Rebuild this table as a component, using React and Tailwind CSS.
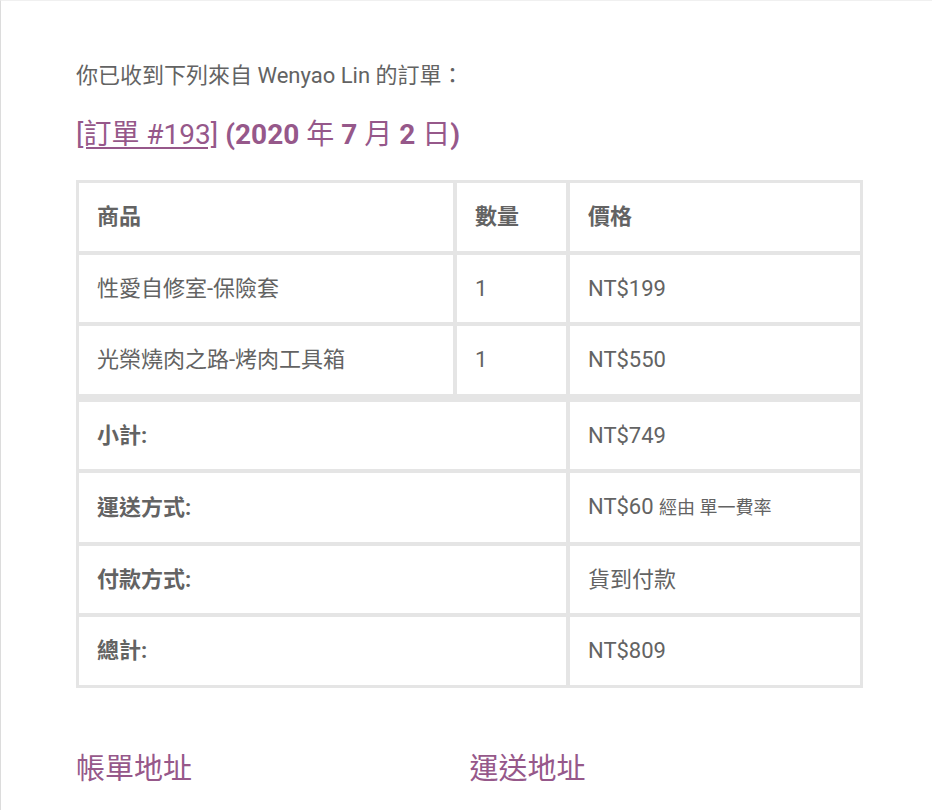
import React from "react";

const FONT = { fontFamily: 'Roboto, "Noto Sans CJK TC", "Liberation Sans", sans-serif' };

function Th({ children, className = "", ...rest }) {
  return (
    <th
      {...rest}
      className={
        "border-2 border-[#e5e5e5] px-[18px] py-[18px] text-left align-middle text-[22px] font-bold leading-[31.5px] text-[#636363] " +
        className
      }
    >
      {children}
    </th>
  );
}

function Td({ children, className = "", ...rest }) {
  return (
    <td
      {...rest}
      className={
        "border-2 border-[#e5e5e5] px-[18px] py-[18px] text-left align-middle text-[22px] font-normal leading-[31.5px] text-[#636363] " +
        className
      }
    >
      {children}
    </td>
  );
}

export default function App() {
  return (
    <div
      style={FONT}
      className="min-h-[810px] w-[932px] border-l border-t border-l-[#dcdcdc] border-t-[#f0f0f0] bg-white pl-[75px]"
    >
      <div className="w-[787px] pt-[59px]">
        <p className="mb-[26px] text-[22px] leading-[31px] text-[#636363]">
          你已收到下列來自 Wenyao Lin 的訂單：
        </p>
        <h2 className="mb-[28px] mt-[3px] text-[28px] font-bold leading-[35px] text-[#96588a]">
          <a href="#" className="font-normal text-[#96588a] underline underline-offset-[3px]">
            [訂單 #193]
          </a>{" "}
          (2020 <span className="font-normal">年</span> 7 <span className="font-normal">月</span> 2{" "}
          <span className="font-normal">日</span>)
        </h2>

        <table className="w-[787px] table-fixed border-separate border-spacing-0 border border-[#e5e5e5]">
          <colgroup>
            <col className="w-[378px]" />
            <col className="w-[113px]" />
            <col className="w-[294px]" />
          </colgroup>
          <thead>
            <tr>
              <Th>商品</Th>
              <Th>數量</Th>
              <Th>價格</Th>
            </tr>
          </thead>
          <tbody>
            <tr>
              <Td>性愛自修室-保險套</Td>
              <Td>1</Td>
              <Td>NT$199</Td>
            </tr>
            <tr>
              <Td>光榮燒肉之路-烤肉工具箱</Td>
              <Td>1</Td>
              <Td>NT$550</Td>
            </tr>
          </tbody>
          <tfoot>
            <tr>
              <Th colSpan={2} className="border-t-[6px]">小計:</Th>
              <Td className="border-t-[6px]">NT$749</Td>
            </tr>
            <tr>
              <Th colSpan={2}>運送方式:</Th>
              <Td>
                NT$60 <span className="text-[18px]">經由 單一費率</span>
              </Td>
            </tr>
            <tr>
              <Th colSpan={2}>付款方式:</Th>
              <Td>貨到付款</Td>
            </tr>
            <tr>
              <Th colSpan={2}>總計:</Th>
              <Td>NT$809</Td>
            </tr>
          </tfoot>
        </table>

        <div className="mt-[64px] grid grid-cols-2">
          <h2 className="text-[29px] font-normal leading-[35px] text-[#96588a]">帳單地址</h2>
          <h2 className="text-[29px] font-normal leading-[35px] text-[#96588a]">運送地址</h2>
        </div>
      </div>
    </div>
  );
}
